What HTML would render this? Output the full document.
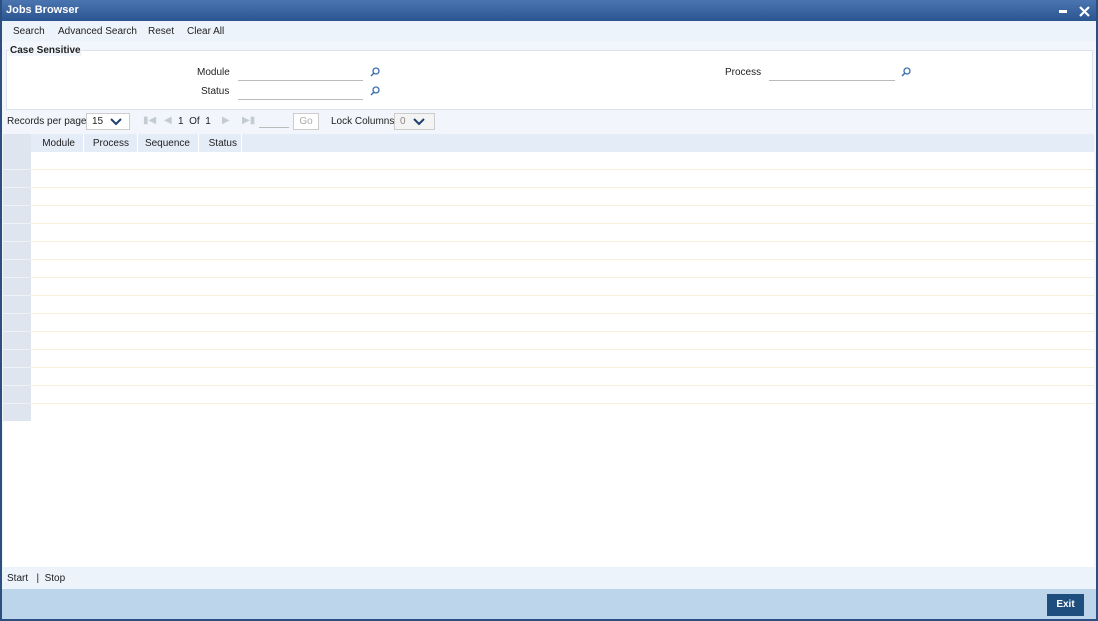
<!DOCTYPE html>
<html><head><style>
*{margin:0;padding:0;box-sizing:border-box}
body{width:1098px;height:621px;position:relative;background:#fff;font-family:"Liberation Sans",Arial,sans-serif;font-size:10px;color:#222;overflow:hidden}
.a{position:absolute;white-space:nowrap}
</style></head><body>
<div class="a" style="left:0;top:0;width:1098px;height:21px;background:linear-gradient(#4a75b0,#2b5591);"></div>
<div class="a" style="left:6px;top:4px;color:#fff;font-weight:bold;font-size:11px">Jobs Browser</div>
<div class="a" style="left:1059px;top:10px;width:8px;height:3px;background:#fff"></div>
<svg class="a" style="left:1079px;top:6px" width="11" height="11"><path d="M1 1L10 10M10 1L1 10" stroke="#fff" stroke-width="2.2"/></svg>
<div class="a" style="left:2px;top:21px;width:1094px;height:20px;background:#edf3fb"></div>
<div class="a" style="left:13px;top:26px">Search</div>
<div class="a" style="left:58px;top:26px">Advanced Search</div>
<div class="a" style="left:148px;top:26px">Reset</div>
<div class="a" style="left:187px;top:26px">Clear All</div>
<div class="a" style="left:2px;top:41px;width:1094px;height:526px;background:#f2f6fc"></div>
<div class="a" style="left:6px;top:50px;width:1087px;height:60px;border:1px solid #dde3ea;background:#fff"></div>
<div class="a" style="left:9px;top:45px;font-weight:bold;background:#f2f6fc;padding:0 1px">Case Sensitive</div>
<div class="a" style="left:197px;top:67px">Module</div>
<div class="a" style="left:201px;top:86px">Status</div>
<div class="a" style="left:725px;top:67px">Process</div>
<div class="a" style="left:238px;top:80px;width:125px;border-top:1px solid #bbb"></div>
<div class="a" style="left:238px;top:99px;width:125px;border-top:1px solid #bbb"></div>
<div class="a" style="left:769px;top:80px;width:126px;border-top:1px solid #bbb"></div>
<svg class="a" style="left:370px;top:67px" width="10" height="10"><circle cx="6" cy="4" r="3" fill="none" stroke="#3a70b0" stroke-width="1.3"/><path d="M4 6L1 9" stroke="#3a70b0" stroke-width="1.5"/></svg>
<svg class="a" style="left:370px;top:86px" width="10" height="10"><circle cx="6" cy="4" r="3" fill="none" stroke="#3a70b0" stroke-width="1.3"/><path d="M4 6L1 9" stroke="#3a70b0" stroke-width="1.5"/></svg>
<svg class="a" style="left:901px;top:67px" width="10" height="10"><circle cx="6" cy="4" r="3" fill="none" stroke="#3a70b0" stroke-width="1.3"/><path d="M4 6L1 9" stroke="#3a70b0" stroke-width="1.5"/></svg>
<div class="a" style="left:7px;top:116px">Records per page</div>
<div class="a" style="left:86px;top:113px;width:44px;height:17px;border:1px solid #ccc;background:#fff;padding:2px 5px">15</div>
<svg class="a" style="left:110px;top:118px" width="12" height="8"><path d="M1 1L6 6L11 1" fill="none" stroke="#1d3f6e" stroke-width="2"/></svg>
<div class="a" style="left:143px;top:115px;color:#c5cbd3">▮◀</div>
<div class="a" style="left:164px;top:115px;color:#c5cbd3">◀</div>
<div class="a" style="left:178px;top:116px">1 &nbsp;Of &nbsp;1</div>
<div class="a" style="left:222px;top:115px;color:#c5cbd3">▶</div>
<div class="a" style="left:242px;top:115px;color:#c5cbd3">▶▮</div>
<div class="a" style="left:259px;top:127px;width:30px;border-top:1px solid #bbb"></div>
<div class="a" style="left:293px;top:113px;width:26px;height:17px;border:1px solid #ccc;background:#fff;color:#aaa;text-align:center;padding-top:2px">Go</div>
<div class="a" style="left:331px;top:116px">Lock Columns</div>
<div class="a" style="left:394px;top:113px;width:41px;height:17px;border:1px solid #ccc;background:#f4f4f4;padding:2px 5px;color:#888">0</div>
<svg class="a" style="left:413px;top:118px" width="12" height="8"><path d="M1 1L6 6L11 1" fill="none" stroke="#1d3f6e" stroke-width="2"/></svg>
<div class="a" style="left:3px;top:134px;width:1091px;height:433px;background:#fff"></div>
<div class="a" style="left:3px;top:134px;width:1091px;height:18px;background:#e4ecf7"></div>
<div class="a" style="left:3px;top:134px;width:28px;height:18px;background:#dfe5ee"></div>
<div class="a" style="left:31px;top:134px;width:53px;height:18px;border-right:1px solid #fff;text-align:right;padding:4px 8px 0 0">Module</div>
<div class="a" style="left:84px;top:134px;width:54px;height:18px;border-right:1px solid #fff;text-align:right;padding:4px 8px 0 0">Process</div>
<div class="a" style="left:138px;top:134px;width:61px;height:18px;border-right:1px solid #fff;text-align:right;padding:4px 8px 0 0">Sequence</div>
<div class="a" style="left:199px;top:134px;width:43px;height:18px;border-right:1px solid #fff;text-align:right;padding:4px 4px 0 0">Status</div>
<div class="a" style="left:3px;top:152px;width:1091px;height:252px;background:repeating-linear-gradient(to bottom,transparent 0,transparent 17px,#f6efd9 17px,#f6efd9 18px)"></div>
<div class="a" style="left:3px;top:152px;width:28px;height:269px;background:repeating-linear-gradient(to bottom,#dfe5ee 0,#dfe5ee 17px,#eef1f6 17px,#eef1f6 18px)"></div>
<div class="a" style="left:2px;top:567px;width:1094px;height:22px;background:#edf3fb"></div>
<div class="a" style="left:7px;top:573px">Start &nbsp; | &nbsp;Stop</div>
<div class="a" style="left:2px;top:589px;width:1094px;height:30px;background:#bcd5ea"></div>
<div class="a" style="left:1047px;top:594px;width:37px;height:22px;background:#1d4e7e;color:#fff;font-weight:bold;text-align:center;padding-top:5px">Exit</div>
<div class="a" style="left:0;top:0;width:1098px;height:621px;border:2px solid #2d4f80;border-top:none"></div>
</body></html>
